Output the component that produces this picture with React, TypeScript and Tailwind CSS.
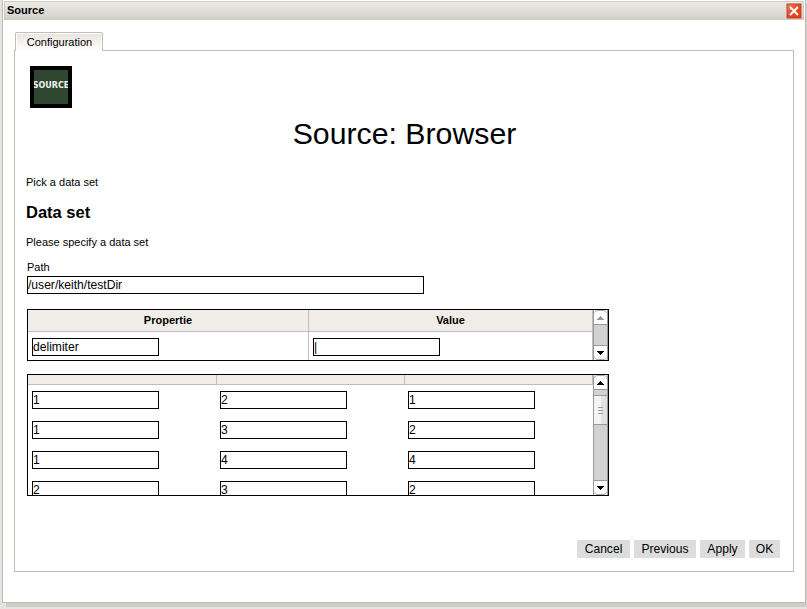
import React from "react";

function Field({ value, className = "w-[127px]" }: { value: string; className?: string }) {
  return (
    <input
      readOnly
      value={value}
      className={`block h-[18px] shrink-0 border border-black bg-white p-0 text-[12.1px] leading-4 text-black outline-none ${className}`}
    />
  );
}

function Arrow({ down = false, disabled = false }: { down?: boolean; disabled?: boolean }) {
  return (
    <div
      className={`flex h-[15px] shrink-0 items-center justify-center bg-white ${
        down ? "rounded-b-[4px] border-t border-[#999] shadow-[inset_0_-1px_0_#aaa]" : "rounded-t-[4px] border-b border-[#999] shadow-[inset_0_1px_0_#aaa]"
      }`}
    >
      <svg width="7" height="4" viewBox="0 0 7 4" shapeRendering="crispEdges" className={`${disabled ? "text-[#999]" : "text-black"} ${down ? "rotate-180" : "mt-[2px]"}`}>
        <path d="M3 0h1v1h1v1h1v1h1v1H0V3h1V2h1V1h1z" fill="currentColor" />
      </svg>
    </div>
  );
}

function ScrollBar({ thumb = false, disabledUp = false }: { thumb?: boolean; disabledUp?: boolean }) {
  return (
    <div className="flex w-[15px] shrink-0 flex-col border-x border-[#999] bg-white">
      <Arrow disabled={disabledUp} />
      <div className="flex-1 bg-[#d2d2d2] pt-[5px]">
        {thumb && (
          <div className="flex h-[30px] flex-col items-center justify-center gap-[2px] border-y border-[#999] bg-linear-to-r from-[#f4f4f4] from-50% to-[#e2e2e2] to-50%">
            <div className="h-px w-[5px] bg-[#999]" />
            <div className="h-px w-[5px] bg-[#999]" />
            <div className="h-px w-[5px] bg-[#999]" />
          </div>
        )}
      </div>
      <Arrow down />
    </div>
  );
}

const rows = [
  ["1", "2", "1"],
  ["1", "3", "2"],
  ["1", "4", "4"],
  ["2", "3", "2"],
];

export default function App() {
  return (
    <div className="h-[609px] w-[807px] overflow-hidden bg-[#e6e4e2] pl-[2px] font-['Liberation_Sans',Arial,sans-serif] text-[11px] text-black">
      <div className="flex h-[603px] w-[804px] flex-col border-x border-b border-[#c1bcb6] bg-white px-px pt-px shadow-[4px_4px_0_#cfcdca]">
        <header className="flex h-[19px] shrink-0 items-center justify-between border border-[#cfcbc3] bg-linear-to-b from-[#eceae6] to-[#d5d1ca] pr-px pl-[2px]">
          <span className="font-bold leading-[17px]">Source</span>
          <svg width="16" height="16" viewBox="0 0 16 16" className="mt-px self-start">
            <defs>
              <linearGradient id="closeFill" x1="0" y1="0" x2="1" y2="1">
                <stop offset="0" stopColor="#f08564" />
                <stop offset="0.5" stopColor="#e2492a" />
                <stop offset="1" stopColor="#e8400a" />
              </linearGradient>
            </defs>
            <rect width="16" height="16" rx="1" fill="#e4eaf8" />
            <rect x="0.5" y="0.5" width="15" height="15" fill="#c53517" />
            <rect x="1.5" y="1.5" width="13" height="13" fill="url(#closeFill)" />
            <path d="M4 4l8 8M12 4l-8 8" stroke="#fff" strokeWidth="2" />
          </svg>
        </header>

        <main className="flex flex-1 flex-col pr-[10px] pb-[30px] pl-[10px] pt-[12px]">
          <div className="z-10 -mb-px ml-px flex h-[19px] w-[88px] shrink-0 items-center justify-center rounded-t-[2px] border border-b-0 border-[#c1bcb6] bg-white p-px pb-0">
            <span className="h-full w-full bg-linear-to-b from-[#e9e6df] to-white pl-px text-center leading-[16px]">Configuration</span>
          </div>
          <section className="flex h-[522px] flex-col border border-[#c1bcb6] pt-[15px] pr-[13px] pb-[13px] pl-[11px]">
            <div className="ml-[4px] flex h-[42px] w-[42px] shrink-0 items-center justify-center overflow-hidden border-4 border-black bg-[#2f4630]">
              <span className="pb-[2px] font-['DejaVu_Sans'] text-[8px] font-bold leading-[8px] text-[#f2f4f2]">SOURCE</span>
            </div>
            <h1 className="mt-[8px] -mr-[3px] text-center text-[30.25px] leading-[36px]">Source: Browser</h1>
            <p className="mt-[24px] leading-[13px]">Pick a data set</p>
            <h2 className="mt-[13px] text-[16.5px] font-bold leading-[20px]">Data set</h2>
            <p className="mt-[14px] leading-[13px]">Please specify a data set</p>
            <div className="mt-[12px] ml-px">
              <label className="block h-[15px] leading-[13px]">Path</label>
              <Field value="/user/keith/testDir" className="w-[397px]" />
            </div>

            <div className="mt-[15px] ml-px flex h-[52px] w-[582px] shrink-0 border border-black">
              <div className="grid flex-1 grid-cols-[281px_1fr] grid-rows-[22px_1fr]">
                <div className="border-r border-b border-[#c0bccb] bg-[#f0ede8] text-center font-bold leading-[21px]">Propertie</div>
                <div className="border-r border-b border-[#c0bccb] bg-[#f0ede8] text-center font-bold leading-[21px]">Value</div>
                <div className="border-r border-[#c0bccb] pt-[6px] pl-[4px]"><Field value="delimiter" /></div>
                <div className="border-r border-[#c0bccb] pt-[6px] pl-[4px]"><Field value="|" /></div>
              </div>
              <ScrollBar disabledUp />
            </div>

            <div className="mt-[13px] ml-px flex h-[122px] w-[582px] shrink-0 overflow-hidden border border-black">
              <div className="w-[565px] shrink-0 overflow-hidden">
                <div className="grid h-[10px] grid-cols-[189px_188px_188px] border-b border-[#c0bccb] bg-[#f0ede8]">
                  <div className="border-r border-[#c0bccb]" />
                  <div className="border-r border-[#c0bccb]" />
                  <div className="border-r border-[#c0bccb]" />
                </div>
                {rows.map((row, i) => (
                  <div key={i} className="grid h-[30px] grid-cols-[188px_188px_185px] pt-[6px] pl-[4px]">
                    {row.map((v, j) => (
                      <Field key={j} value={v} />
                    ))}
                  </div>
                ))}
              </div>
              <ScrollBar thumb />
            </div>

            <div className="mt-auto flex justify-end gap-1 text-[12.1px]">
              <button className="h-[18px] w-[53px] bg-[#dddddd] leading-[18px]">Cancel</button>
              <button className="h-[18px] w-[62px] bg-[#dddddd] leading-[18px]">Previous</button>
              <button className="h-[18px] w-[45px] bg-[#dddddd] leading-[18px]">Apply</button>
              <button className="h-[18px] w-[31px] bg-[#dddddd] leading-[18px]">OK</button>
            </div>
          </section>
        </main>
      </div>
    </div>
  );
}
